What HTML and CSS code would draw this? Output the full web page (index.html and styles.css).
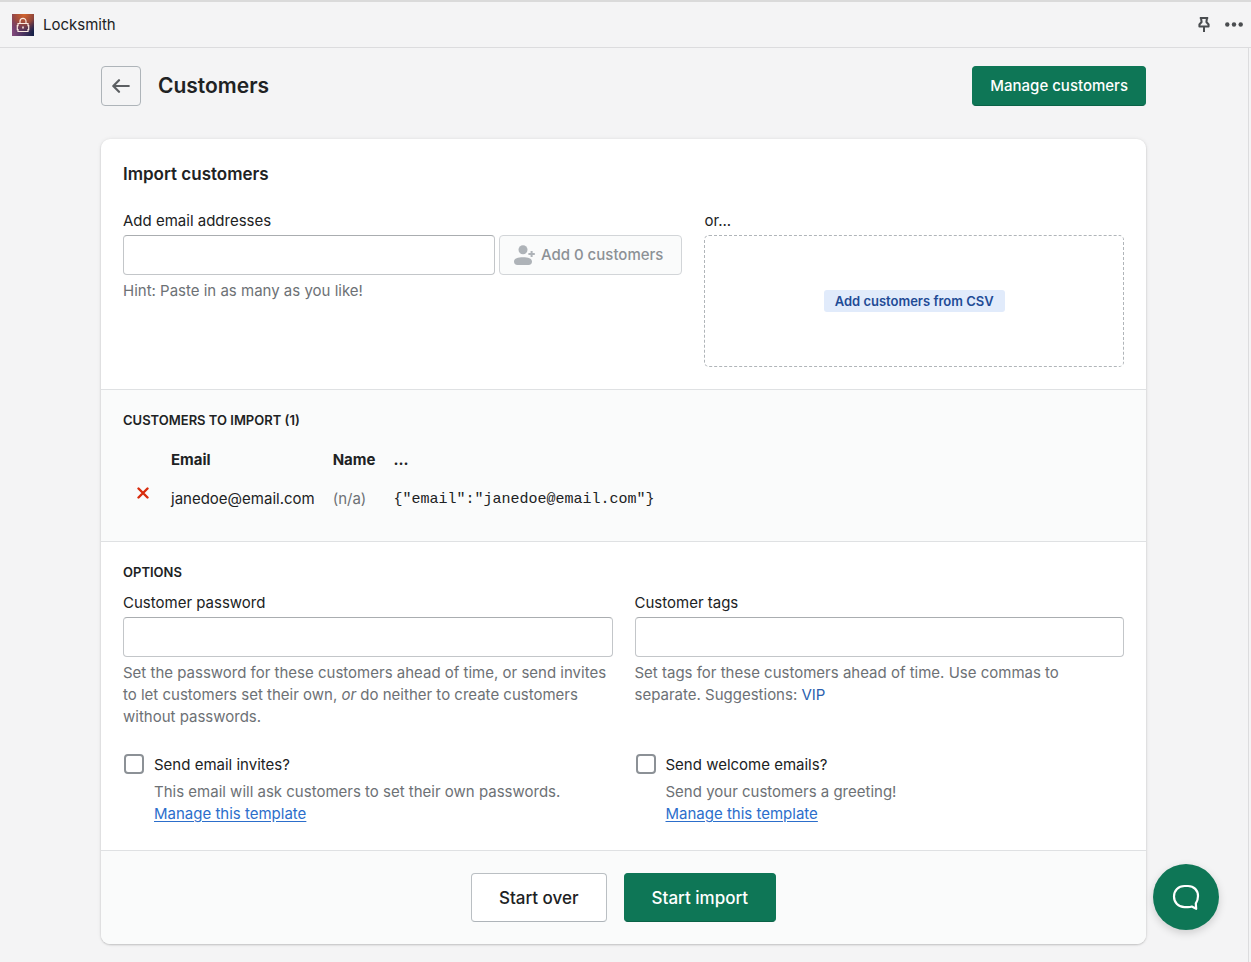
FILE: index.html
```html
<!DOCTYPE html>
<html lang="en">
<head>
<meta charset="utf-8">
<meta name="viewport" content="width=device-width, initial-scale=1">
<title>Locksmith – Customers</title>
<link rel="stylesheet" href="styles.css">
</head>
<body>
<header class="topbar">
  <svg class="topbar-logo" viewBox="0 0 22 22" aria-hidden="true">
    <defs>
      <linearGradient id="lg-base" x1="0" y1="1" x2="1" y2="1"><stop offset="0" stop-color="#85497c"/><stop offset="1" stop-color="#131f45"/></linearGradient>
      <radialGradient id="lg-glow" cx="0.55" cy="0" r="0.9"><stop offset="0" stop-color="#d8672c"/><stop offset="0.5" stop-color="#a54c38" stop-opacity="0.85"/><stop offset="1" stop-color="#5b3057" stop-opacity="0"/></radialGradient>
    </defs>
    <path fill="url(#lg-base)" d="M0 0h22v22H0z"/>
    <path fill="url(#lg-glow)" d="M0 0h22v22H0z"/>
    <path fill="none" stroke="#fbe9e0" stroke-width="1.200" d="M8 9.500V7.300a3 3 0 0 1 6 0v2.200M6 9.500h10v2.200h.7v4h-.7v1.800H6v-1.800h-.7v-4H6z"/>
    <path fill="#fbe9e0" d="M10.200 12.500h1.600v2h-1.600z"/>
  </svg>
  <span class="topbar-name">Locksmith</span>
  <button class="icon-button" type="button" aria-label="Pin app">
    <svg width="14" height="18" viewBox="0 0 14 18" fill="none" stroke="#4a4d50" stroke-width="2" stroke-linejoin="round"><path d="M2.800 2h8.400M4 2l.6 4L2.400 8.500v2h9.200v-2L9.400 6 10 2M7 10.500V16"/></svg>
  </button>
  <button class="icon-button" type="button" aria-label="More actions">
    <svg width="18" height="6" viewBox="0 0 18 6" fill="#4a4d50"><circle cx="2.300" cy="2.500" r="2.200"/><circle cx="9" cy="2.500" r="2.200"/><circle cx="15.700" cy="2.500" r="2.200"/></svg>
  </button>
</header>

<main class="frame">
  <div class="page">
    <div class="page-header">
      <button class="back-button" type="button" aria-label="Back">
        <svg width="18" height="14" viewBox="0 0 18 14" fill="none" stroke="#5c5f62" stroke-width="2.200" stroke-linecap="round" stroke-linejoin="round"><path d="M16.800 7H1.500M7 1.200 1.300 7 7 12.800"/></svg>
      </button>
      <h1 class="page-title">Customers</h1>
      <button class="button button-primary" type="button">Manage customers</button>
    </div>

    <form class="card">
      <section class="section">
        <h2 class="card-title">Import customers</h2>
        <div class="import-grid">
          <div>
            <label class="label" for="emails">Add email addresses</label>
            <div class="add-row">
              <input class="input" id="emails" type="text">
              <button class="button button-disabled" type="button" disabled>
                <svg width="21" height="20" viewBox="0 0 21 20" fill="#aeb3b8"><circle cx="9" cy="4.800" r="4.500"/><path d="M0 16.500C0 13.500 4 12.200 9 12.200s9 1.300 9 4.300c0 2.300-1.200 3.500-3.500 3.500h-11C1.200 20 0 18.800 0 16.500zM16.600 6h2v2.100h2.200v1.800h-2.200V12h-2V9.900h-2.200V8.100h2.200z"/></svg>
                Add 0 customers
              </button>
            </div>
            <p class="help">Hint: Paste in as many as you like!</p>
          </div>
          <div>
            <p class="label">or...</p>
            <div class="dropzone"><button class="dropzone-action" type="button">Add customers from CSV</button></div>
          </div>
        </div>
      </section>

      <section class="section section-subdued section-list">
        <h3 class="subheading">Customers to import (1)</h3>
        <table class="customers">
          <thead>
            <tr><td></td><th scope="col">Email</th><th scope="col">Name</th><th scope="col">...</th></tr>
          </thead>
          <tbody>
            <tr>
              <td class="remove-cell"><button class="remove" type="button" aria-label="Remove janedoe@email.com"><svg width="12" height="12" viewBox="0 0 12 12" fill="none" stroke="#d82c0d" stroke-width="2.400" stroke-linecap="round"><path d="m1.500 1.500 9 9M10.500 1.500l-9 9"/></svg></button></td>
              <td>janedoe@email.com</td>
              <td class="muted">(n/a)</td>
              <td><code class="code">{"email":"janedoe@email.com"}</code></td>
            </tr>
          </tbody>
        </table>
      </section>

      <section class="section section-options">
        <h3 class="subheading">Options</h3>
        <div class="options-grid">
          <div>
            <label class="label" for="password">Customer password</label>
            <input class="input" id="password" type="text">
            <p class="help">Set the password for these customers ahead of time, or send invites to let customers set their own, <em>or</em> do neither to create customers without passwords.</p>
          </div>
          <div>
            <label class="label" for="tags">Customer tags</label>
            <input class="input" id="tags" type="text">
            <p class="help">Set tags for these customers ahead of time. Use commas to separate. Suggestions: <a class="tag-link" href="#vip">VIP</a></p>
          </div>
          <div class="choice">
            <input class="checkbox" id="invites" type="checkbox">
            <div>
              <label class="choice-label" for="invites">Send email invites?</label>
              <p class="help">This email will ask customers to set their own passwords.<br><a class="link" href="#invite-template">Manage this template</a></p>
            </div>
          </div>
          <div class="choice">
            <input class="checkbox" id="welcome" type="checkbox">
            <div>
              <label class="choice-label" for="welcome">Send welcome emails?</label>
              <p class="help">Send your customers a greeting!<br><a class="link" href="#welcome-template">Manage this template</a></p>
            </div>
          </div>
        </div>
      </section>

      <footer class="section section-subdued actions">
        <button class="button button-large" type="reset">Start over</button>
        <button class="button button-large button-primary" type="submit">Start import</button>
      </footer>
    </form>
  </div>
</main>

<button class="chat" type="button" aria-label="Open chat">
  <svg width="28" height="28" viewBox="0 0 28 28" fill="none" stroke="#fff" stroke-width="2.200" stroke-linejoin="round"><path d="M12.500 3h3.500c6 0 10 4.300 10 10 0 3-.8 5.500-2.200 7.500l.4 5.300-4.400-2.200c-1 .4-2.200.6-3.800.6h-3.500C6.300 24.200 2 19.500 2 13.500S6.300 3 12.500 3z"/></svg>
</button>
</body>
</html>
```
FILE: styles.css
```css
*, *::before, *::after { box-sizing: border-box; }

body {
  margin: 0;
  min-height: 100vh;
  display: flex;
  flex-direction: column;
  background: #f4f4f5;
  color: #202223;
  font: 15px/22px Inter, "Liberation Sans", sans-serif;
}

h1, h2, h3, p { margin: 0; }
button, input { font: inherit; color: inherit; }
button { cursor: pointer; }
svg { display: block; flex: none; }

.topbar {
  display: flex;
  align-items: center;
  height: 48px;
  padding: 0 8px 0 12px;
  border-top: 2px solid #dadada;
  border-bottom: 1px solid #dcdcde;
}
.topbar-logo { width: 22px; height: 22px; margin-right: 9px; }
.topbar-name { flex: 1; }
.icon-button {
  margin-left: 14px;
  padding: 0;
  border: 0;
  background: none;
}

.frame {
  flex: 1;
  margin-right: 2px;
  padding: 18px 23px 18px 22px;
  border-right: 1px solid #dcdcde;
}
.page { max-width: 1045px; margin: 0 auto; }

.page-header {
  display: flex;
  align-items: center;
  margin-bottom: 33px;
}
.back-button {
  display: flex;
  align-items: center;
  justify-content: center;
  width: 40px;
  height: 40px;
  margin-right: 17px;
  padding: 0;
  border: 1px solid #aeb4b9;
  border-radius: 4px;
  background: none;
}
.page-title {
  flex: 1;
  font-size: 21px;
  line-height: 30px;
  font-weight: 600;
}

.button {
  display: inline-flex;
  align-items: center;
  justify-content: center;
  gap: 6px;
  height: 40px;
  padding: 0 17px;
  border: 1px solid #babfc3;
  border-bottom-color: #aeb4b9;
  border-radius: 4px;
  background: #fff;
  font-weight: 500;
  white-space: nowrap;
}
.button-primary {
  border-color: #0e7656 #0e7656 #0a6247;
  background: #0e7656;
  color: #fff;
}
.button-disabled {
  padding: 0 18px 0 14px;
  border-color: #d2d5d8;
  background: #fafbfb;
  color: #8c9196;
  cursor: default;
}
.button-large {
  height: 49px;
  padding: 0 27px;
  font-size: 17px;
}

.card {
  border-radius: 9px;
  background: #fff;
  box-shadow: 0 0 4px rgba(23, 24, 24, 0.08), 0 1px 2px rgba(0, 0, 0, 0.18);
  overflow: hidden;
}
.section { padding: 22px; }
.section + .section { border-top: 1px solid #dfe1e3; }
.section-subdued { background: #fafbfb; }
.card-title {
  margin-bottom: 23px;
  font-size: 17px;
  line-height: 26px;
  font-weight: 600;
}
.subheading {
  font-size: 13px;
  line-height: 18px;
  font-weight: 600;
  text-transform: uppercase;
}

.import-grid {
  display: grid;
  grid-template-columns: 4fr 3fr;
  gap: 22px;
}
.add-row { display: flex; gap: 4px; }
.label { display: block; margin-bottom: 3px; }
.input {
  display: block;
  width: 100%;
  min-width: 0;
  height: 40px;
  padding: 0 13px;
  border: 1px solid #c3c6c9;
  border-top-color: #aaadb0;
  border-radius: 4px;
  background: #fff;
}
.help { margin-top: 5px; color: #6d7175; }

.dropzone {
  display: flex;
  align-items: center;
  justify-content: center;
  height: 132px;
  border: 1px dashed #b0b5b9;
  border-radius: 5px;
}
.dropzone-action {
  padding: 0 11px;
  border: 0;
  border-radius: 3px;
  background: #e1ebfb;
  color: #1f4b96;
  font-size: 13px;
  line-height: 22px;
  font-weight: 600;
}

.section.section-list { padding: 21px 22px 23px; }
.customers {
  margin-top: 11px;
  border-collapse: collapse;
}
.customers th, .customers td {
  height: 39px;
  padding: 0 9px;
  text-align: left;
  font-weight: 400;
}
.customers th { font-weight: 700; }
.customers .muted { color: #6d7175; }
.customers .remove-cell { padding: 0 13px 0 14px; }
.remove {
  display: block;
  margin-bottom: 12px;
  padding: 0;
  border: 0;
  background: none;
}
.code { font: 15px/22px "Liberation Mono", monospace; }

.section.section-options { padding: 21px 22px 25px; }
.options-grid {
  display: grid;
  grid-template-columns: 1fr 1fr;
  gap: 26px 22px;
  margin-top: 11px;
}
.choice { display: flex; gap: 10px; padding-left: 1px; }
.choice-label { display: block; }
.checkbox {
  appearance: none;
  flex: none;
  width: 20px;
  height: 20px;
  margin: 0;
  border: 2px solid #8c9196;
  border-radius: 4px;
  background: #fff;
}
.link { color: #2c6ecb; text-underline-offset: 2px; }
.tag-link { color: #2c5faf; text-decoration: none; }

.actions {
  display: flex;
  justify-content: center;
  gap: 17px;
}

.chat {
  position: fixed;
  right: 32px;
  bottom: 32px;
  display: flex;
  align-items: center;
  justify-content: center;
  width: 66px;
  height: 66px;
  padding: 0;
  border: 0;
  border-radius: 50%;
  background: #0e7656;
  box-shadow: 0 3px 9px rgba(0, 0, 0, 0.16);
}
```
